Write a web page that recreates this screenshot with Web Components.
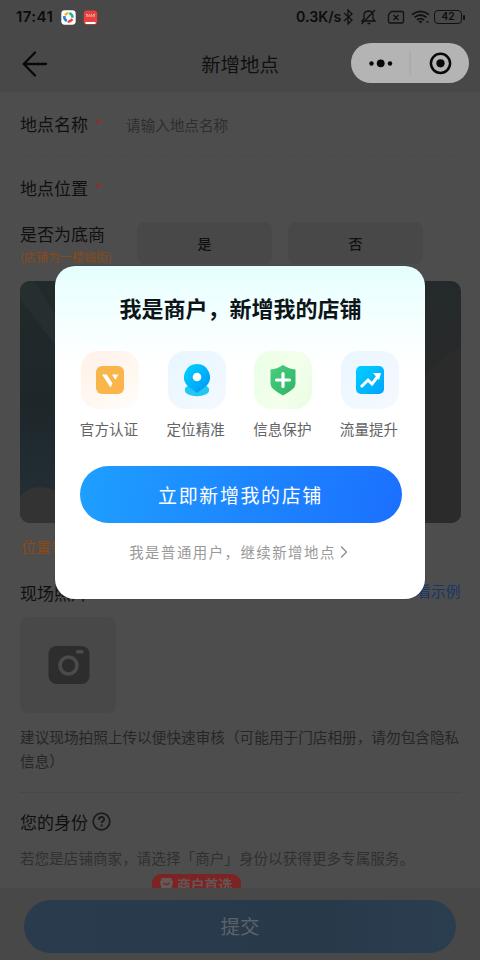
<!DOCTYPE html>
<html lang="zh-CN">
<head>
<meta charset="utf-8">
<title>新增地点</title>
<style>
html,body{margin:0;height:960px;overflow:hidden}
body{background:#4d4d4d;font-family:"Noto Sans CJK SC",sans-serif;color:#101010}
</style>
</head>
<body>
<place-app></place-app>
<script>
const define=(name,css,html)=>customElements.define(name,class extends HTMLElement{
  constructor(){
    super();
    const t=document.createElement('template');
    t.innerHTML=`<style>*{box-sizing:border-box}svg{display:block;flex:none}${css}</style>${html}`;
    this.attachShadow({mode:'open'}).append(t.content.cloneNode(true));
  }
});

define('status-bar',`
:host{display:flex;align-items:center;height:34px;padding:0 15px 0 16px;font:600 15px/34px Inter,sans-serif;color:#0c0c0c}
.time{width:45px;letter-spacing:.4px}.apps{display:flex;gap:7px;flex:1}.speed{font-size:14.200px;width:46px;white-space:nowrap}
`,`
<span class="time">17:41</span>
<span class="apps">
<svg width="15" height="15" viewBox="0 0 15 15"><rect x=".3" y=".3" width="14.4" height="14.4" rx="3.4" fill="#fff"/><g fill="none" stroke-width="2.5"><path d="M4 5.2Q5.5 3 7.5 3.2" stroke="#f5b21d"/><path d="M8.4 3.3Q11.5 4.2 11.7 7.7" stroke="#20b7a1"/><path d="M11.4 9Q9.4 12 6.7 11.6" stroke="#ea4639"/><path d="M5.8 11Q3 9.5 3.3 6" stroke="#2880d8"/></g></svg>
<svg width="15" height="15" viewBox="0 0 15 15"><rect x=".8" y=".4" width="13.4" height="14.2" rx="3" fill="#e84040"/><path d="M2.5 12h10v2h-10z" fill="#fff"/><path d="M3 4.6h2m1 0h1m1 0h1m1 0h2M3 6h9" stroke="#f5b8a8" stroke-width="1"/></svg>
</span>
<span class="speed">0.3K/s</span>
<svg width="92" height="18" viewBox="0 0 92 18" fill="none" stroke="#111" stroke-width="1.300">
<path d="M2 5l8 7-4 4V2l4 4-8 7"/>
<path d="M20 13h13l-2-2.500V7q0-3.800-4.200-4Q22 3.200 22 7v3.500zM25.500 15.500h3M19.500 16L33 2"/>
<path d="M49.500 3.500H60q1.500 0 1.500 1.500v8.500q0 1.500-1.500 1.500H48q-1.500 0-1.500-1.500V6.500zM51.500 7l5 5m0-5l-5 5"/>
<path d="M70 6.700q8.500-6.800 17 0M72.500 9.400q6-4.800 12 0M75 12q3.500-2.800 7 0" stroke-width="1.700"/><path d="M76.500 13.500q2-1.500 4 0l-2 2z" fill="#111" stroke="none"/><path d="M84 14h3" stroke-width="1"/>
</svg>
<status-battery>42</status-battery>
`);

define('status-battery',`
:host{display:flex;flex:none;align-items:center;gap:1px;width:31px;font:600 10px/10.500px Inter,sans-serif}
.b{width:28px;height:14px;border:1.500px solid #111;border-radius:4px;text-align:center}.t{width:2px;height:5px;background:#111;border-radius:1px}
`,`<span class="b"><slot></slot></span><span class="t"></span>`);

define('capsule-menu',`
:host{display:flex;align-items:center;width:118px;height:40px;border-radius:20px;background:#b4b4b4}
`,`
<svg width="118" height="40" viewBox="0 0 118 40" fill="#080808"><circle cx="20.500" cy="20.500" r="2.200"/><circle cx="29.700" cy="20.300" r="3.900"/><circle cx="39" cy="20.500" r="2.200"/><path d="M59 8v24" stroke="#a5a5a5"/><circle cx="89.500" cy="20.300" r="9.600" fill="none" stroke="#080808" stroke-width="2.500"/><circle cx="89.500" cy="20.300" r="4.100"/></svg>
`);

define('nav-bar',`
:host{display:grid;grid-template-columns:1fr auto 1fr;align-items:center;height:58px;padding:0 11px 0 22px}
.title{font-size:19.400px;line-height:28px;padding:1px 0 0;margin-right:11px}svg{margin-top:2px}capsule-menu{justify-self:end}
`,`
<svg width="26" height="26" viewBox="0 0 26 26" fill="none" stroke="#080808" stroke-width="2.300" stroke-linecap="round" stroke-linejoin="round"><path d="M13 1.500L1.800 13 13 24.500M2 13h22"/></svg>
<span class="title"><slot></slot></span><capsule-menu></capsule-menu>
`);

define('field-label',`
:host{display:flex;font-size:17px;line-height:26px}i{font:normal 17px/27px "Noto Sans CJK SC",sans-serif;color:#8a3325;margin-left:7px}
`,`<slot></slot><i>*</i>`);

define('choice-chip',`
:host{display:grid;place-items:center;width:135px;height:42px;margin-top:2px;border-radius:8px;background:#484848;font-size:14px;font-weight:500}
`,`<slot></slot>`);

define('map-preview',`
:host{display:block;height:242px;border-radius:10px;overflow:hidden}
`,`
<svg width="441" height="242" viewBox="0 0 441 242"><defs><linearGradient id="l" x2="0" y2="1"><stop stop-color="#222a2a"/><stop offset=".5" stop-color="#1d272a"/><stop offset="1" stop-color="#253038"/></linearGradient><linearGradient id="r" x2="0" y2="1"><stop stop-color="#242a2b"/><stop offset=".45" stop-color="#292929"/><stop offset="1" stop-color="#2c2c2b"/></linearGradient></defs><path fill="url(#l)" d="M0 0h220v242H0z"/><path fill="#272e2f" d="M0 0h14l24 38v30L0 18z"/><path fill="url(#r)" d="M220 0h221v242H220z"/><path d="M0 215q15-15 36-5v32H0z" fill="#333"/><path d="M404 94l37-31v179h-37z" fill="#2b2b2b"/></svg>
`);

define('photo-picker',`
:host{display:grid;place-items:center;width:96px;height:96px;padding-left:2px;border-radius:8px;background:#484848}
`,`
<svg width="42" height="40" viewBox="0 0 42 40"><rect x=".5" y="1" width="41" height="38" rx="8" fill="#2d2d2d"/><circle cx="20.500" cy="20.500" r="8.500" fill="none" stroke="#4b4b4b" stroke-width="3.700"/><rect x="28" y="5" width="7.500" height="3.400" rx="1.200" fill="#4b4b4b"/></svg>
`);

define('merchant-badge',`
:host{display:flex;align-items:flex-start;gap:4px;width:89px;height:14px;overflow:hidden;background:#7c2424;border-radius:9px 9px 0 0;padding:2px 8px 0;font-size:13.800px;line-height:16px;font-weight:700;color:#625756;white-space:nowrap}svg{margin-top:2px}
`,`
<svg width="13" height="13" viewBox="0 0 13 13"><path d="M2 0h9l2 4-2 9H2L0 4z" fill="#645958"/><path d="M3.500 5q3 3 6 0" fill="none" stroke="#742323" stroke-width="1.300"/></svg><slot></slot>
`);

define('place-form',`
:host{display:flex;flex-direction:column;height:796px;padding:0 19.500px 0 20px;background:#4d4d4d;overflow:hidden}
.row{display:flex;align-items:center;flex:none}
.name{height:64px;padding-top:2px;gap:23px;border-bottom:1px dashed #494949}
.ph{font-size:14.600px;color:#2e2e2e}.loc{height:64px}
.shop{height:61px;align-items:flex-start;gap:16px}
.q{width:101px;white-space:nowrap;font-size:17px;line-height:26px;padding-top:1px}.q small{display:block;font-size:12px;line-height:18px;margin-top:1px;color:#8a4a18}
map-preview{flex:none;width:441px}
.warn{color:#8a4a18;font-size:15px;height:46px;padding-left:1px}
.photo{height:48px;padding-bottom:1px;justify-content:space-between;font-size:17px}.photo a{font-size:14.700px;color:#18346a;margin-bottom:4px}
photo-picker{flex:none}
.hint{margin:12px 0 19px;font-size:14.650px;line-height:24px;color:#262626;width:445px}
.id{border-top:1px solid #474747;height:58px;font-size:17px;gap:4px}
.desc{height:24px;font-size:14.600px;line-height:24px;margin-top:-4px;color:#303030}
merchant-badge{flex:none;margin:4px 0 0 132px}
`,`
<div class="row name"><field-label>地点名称</field-label><span class="ph">请输入地点名称</span></div>
<div class="row loc"><field-label>地点位置</field-label></div>
<div class="row shop"><div class="q">是否为底商<small>(店铺为一楼临街)</small></div><choice-chip>是</choice-chip><choice-chip>否</choice-chip></div>
<map-preview></map-preview>
<div class="row warn">位置错</div>
<div class="row photo"><span>现场照片</span><a>看示例</a></div>
<photo-picker></photo-picker>
<div class="hint">建议现场拍照上传以便快速审核（可能用于门店相册，请勿包含隐私信息）</div>
<div class="row id"><span>您的身份</span><svg width="19" height="19" viewBox="0 0 19 19" fill="none" stroke="#1b1b1b" stroke-width="1.700"><circle cx="9.500" cy="9.500" r="8.300"/><path d="M6.900 7.700c0-3.700 5.500-3.400 5.300-.3-.1 1.800-2.600 1.900-2.600 3.700M9.600 12.600v1.900" stroke-width="1.900"/></svg></div>
<div class="desc">若您是店铺商家，请选择「商户」身份以获得更多专属服务。</div>
<merchant-badge>商户首选</merchant-badge>
`);

define('submit-bar',`
:host{display:block;height:72px;padding:12px 24px 7px;background:#484848}
button{display:block;width:100%;height:53px;border:0;border-radius:27px;background:linear-gradient(90deg,#293b4d,#28394a 70%,#2b3e50);color:#5a626a;font:19.500px "Noto Sans CJK SC",sans-serif;padding:0 0 2px}
`,`<button><slot></slot></button>`);

define('benefit-item',`
:host{display:flex;flex-direction:column;align-items:center;width:60px;font-size:14.600px;line-height:22px;color:#626466;white-space:nowrap}
.tile{display:grid;place-items:center;width:58px;height:58px;border-radius:17px;background:var(--tile);margin-bottom:9px}
.label{margin-right:2px}
`,`<div class="tile"><slot name="icon"></slot></div><span class="label"><slot></slot></span>`);

define('merchant-dialog',`
:host{display:flex;flex-direction:column;align-items:center;width:370px;height:333px;border-radius:20px;background:linear-gradient(#e5fefe 0,#edffff 25px,#f7ffff 65px,#fff 98px);padding:25px 24px 0 25px;overflow:hidden;box-shadow:0 0 1px #222}
h1{margin:0;font-size:22px;line-height:32px;font-weight:700;color:#0d1518;white-space:nowrap}
.items{display:flex;justify-content:space-between;width:320px;margin:28px 1px 25px 0;flex:none;height:90px}
button{width:322px;height:57px;flex:none;border:0;border-radius:29px;background:linear-gradient(100deg,#1e9fff,#1d87ff 50%,#1b70ff);color:#fff;font:19px "Noto Sans CJK SC",sans-serif;letter-spacing:1.600px;padding:0 0 1px}
.link{display:flex;align-items:center;font-size:14.400px;line-height:24px;letter-spacing:1.500px;color:#999;margin:17px 4px 0 0;gap:4px;white-space:nowrap}
`,`
<h1>我是商户，新增我的店铺</h1>
<div class="items">
<benefit-item style="--tile:linear-gradient(145deg,#fff1e9,#fff8f1 60%,#fffdfb)"><svg slot="icon" width="28" height="28" viewBox="0 0 28 28"><defs><linearGradient id="o" x2="1" y2="1"><stop stop-color="#f5b74a"/><stop offset="1" stop-color="#ffb34b"/></linearGradient></defs><rect width="28" height="28" rx="6" fill="url(#o)"/><path d="M6 8.500h4.800l5.700 9-2 4z" fill="#fff"/><path d="M16 8.500h6.500l-3.200 5.300z" fill="#fff"/></svg>官方认证</benefit-item>
<benefit-item style="--tile:linear-gradient(145deg,#e8f6ff,#f4f9ff)"><svg slot="icon" width="28" height="34" viewBox="0 0 28 34"><defs><linearGradient id="p" x1="0" y1="0" x2="1" y2="1"><stop stop-color="#00d4ff"/><stop offset="1" stop-color="#0094f5"/></linearGradient></defs><ellipse cx="14" cy="27" rx="12.200" ry="6.200" fill="#24c7f2"/><path d="M14 1a13 13 0 0 1 9.300 22L14 30 4.700 23A13 13 0 0 1 14 1z" fill="url(#p)"/><circle cx="14" cy="14" r="4.300" fill="#fff"/></svg>定位精准</benefit-item>
<benefit-item style="--tile:linear-gradient(115deg,#eaffe5,#f3ffec 60%,#e9fce1)"><svg slot="icon" width="28" height="32" viewBox="0 0 28 32"><defs><linearGradient id="g" x2="1" y2="1"><stop stop-color="#48ce7d"/><stop offset="1" stop-color="#2fb467"/></linearGradient></defs><path d="M14 1q6 4 12.500 4.500V20q0 5-12.500 11.500Q1.500 25 1.500 20V5.500Q8 5 14 1z" fill="url(#g)"/><path d="M14 9.500v13M7.500 16h13" stroke="#fff" stroke-width="3.200" stroke-linecap="round"/></svg>信息保护</benefit-item>
<benefit-item style="--tile:linear-gradient(145deg,#eaf6ff,#f6f9ff)"><svg slot="icon" width="28" height="28" viewBox="0 0 28 28"><defs><linearGradient id="b" x1="0" y1="0" x2="1" y2="1"><stop stop-color="#00d0ff"/><stop offset="1" stop-color="#00a3ff"/></linearGradient></defs><rect width="28" height="28" rx="5" fill="url(#b)"/><path d="M5 21l7-7 4 4 6-8" fill="none" stroke="#fff" stroke-width="3"/><path d="M17 7h8l-2 7z" fill="#fff"/></svg>流量提升</benefit-item>
</div>
<button>立即新增我的店铺</button>
<div class="link">我是普通用户，继续新增地点<svg width="8" height="14" viewBox="0 0 8 14" fill="none" stroke="#8c8c8c" stroke-width="1.300"><path d="M1 1.500L6.500 7 1 12.500"/></svg></div>
`);

define('place-app',`
:host{display:flex;flex-direction:column;position:relative;width:480px;height:960px;overflow:hidden;background:#484848}
place-form,submit-bar{flex:none}
.overlay{position:absolute;inset:0;display:flex;justify-content:center;align-items:flex-start;padding-top:266px}
`,`
<status-bar></status-bar><nav-bar>新增地点</nav-bar><place-form></place-form><submit-bar>提交</submit-bar>
<div class="overlay"><merchant-dialog></merchant-dialog></div>
`);
</script>
</body>
</html>
